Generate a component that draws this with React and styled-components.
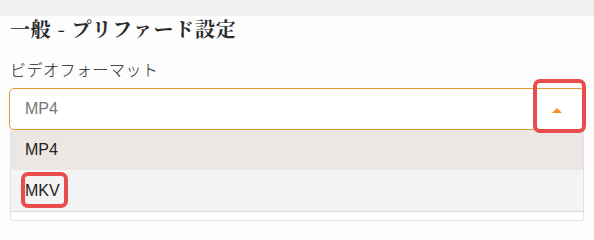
import React from "react";
import styled, { createGlobalStyle } from "styled-components";

const GlobalStyle = createGlobalStyle`
  body {
    margin: 0;
    background: #fdfdfd;
    font-family: "Liberation Sans", "Noto Sans CJK JP", sans-serif;
  }
`;

const TopBar = styled.div`
  height: 16px;
  background: #f0f0f0;
`;

const Page = styled.div`
  position: relative;
  padding: 0 9px;
`;

const Title = styled.h2`
  margin: 0;
  padding: 1px 0 0 1px;
  font-family: "Noto Serif CJK JP", "Noto Sans CJK JP", serif;
  font-weight: 700;
  font-size: 20px;
  line-height: 24px;
  letter-spacing: 0.8px;
  color: #2a2a2a;
`;

const Label = styled.div`
  margin-top: 18px;
  padding-left: 1px;
  font-family: "Noto Sans CJK JP", sans-serif;
  font-weight: 300;
  font-size: 16px;
  line-height: 20px;
  letter-spacing: 0.5px;
  color: #1a1a1a;
`;

const Select = styled.div`
  margin-top: 9px;
  height: 40px;
  display: flex;
  align-items: center;
  justify-content: space-between;
  padding: 0 22px 0 15px;
  background: #fff;
  border: 1px solid #e39a30;
  border-radius: 5px;
  font-size: 16px;
  color: #777;
`;

const Caret = styled.span`
  width: 0;
  height: 0;
  border-left: 5px solid transparent;
  border-right: 5px solid transparent;
  border-bottom: 5px solid #f0921c;
  margin-top: 2px;
`;

const Menu = styled.div`
  margin: 0 1px;
  padding-bottom: 8px;
  background: #fff;
  border: 1px solid #e2e2e2;
  border-top: none;
  border-radius: 0 0 4px 4px;
`;

const Options = styled.div`
  border-bottom: 1px solid #dcdcdc;
`;

const Option = styled.div`
  height: ${(p) => p.$h}px;
  display: flex;
  align-items: center;
  padding-left: 14px;
  font-size: 16px;
  color: #222;
  background: ${(p) => (p.$active ? "#ece7e3" : "#f4f4f4")};
`;

const Highlight = styled.div`
  position: absolute;
  box-sizing: border-box;
  border: 4px solid #ea4d4d;
  border-radius: 7px;
`;

export default function App() {
  const options = [
    { name: "MP4", active: true, h: 40 },
    { name: "MKV", active: false, h: 41 },
  ];

  return (
    <>
      <GlobalStyle />
      <TopBar />
      <Page>
        <Title>一般 - プリファード設定</Title>
        <Label>ビデオフォーマット</Label>
        <Select>
          <span>MP4</span>
          <Caret />
        </Select>
        <Menu>
          <Options>
            {options.map((o) => (
              <Option key={o.name} $active={o.active} $h={o.h}>
                {o.name}
              </Option>
            ))}
          </Options>
        </Menu>
        <Highlight style={{ left: 533, top: 63, width: 53, height: 54 }} />
        <Highlight style={{ left: 21, top: 156, width: 47, height: 36 }} />
      </Page>
    </>
  );
}
